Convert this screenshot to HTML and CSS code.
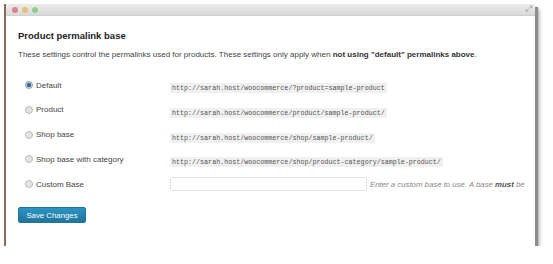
FILE: index.html
```html
<!DOCTYPE html>
<html lang="en">
  <head>
    <meta charset="UTF-8" />
    <title>Product permalink base</title>
    <link rel="stylesheet" href="styles.css">
  </head>
  <body>
    <div class="window">
      <div class="titlebar">
        <span class="dot red"></span>
        <span class="dot yellow"></span>
        <span class="dot green"></span>
        <span class="resize">&#x2922;</span>
      </div>
      <div class="content">
        <h3>Product permalink base</h3>
        <p class="desc">These settings control the permalinks used for products. These settings only apply when <strong>not using "default" permalinks above</strong>.</p>

        <div class="options">
          <label class="opt"><span class="radio checked"></span>Default</label>
          <div><code>http://sarah.host/woocommerce/?product=sample-product</code></div>

          <label class="opt"><span class="radio"></span>Product</label>
          <div><code>http://sarah.host/woocommerce/product/sample-product/</code></div>

          <label class="opt"><span class="radio"></span>Shop base</label>
          <div><code>http://sarah.host/woocommerce/shop/sample-product/</code></div>

          <label class="opt"><span class="radio"></span>Shop base with category</label>
          <div><code>http://sarah.host/woocommerce/shop/product-category/sample-product/</code></div>

          <label class="opt"><span class="radio"></span>Custom Base</label>
          <div class="custom">
            <input type="text" />
            <span class="help">Enter a custom base to use. A base <strong>must</strong> be</span>
          </div>
        </div>

        <button class="save">Save Changes</button>
      </div>
    </div>
  </body>
</html>
```

FILE: styles.css
```css
body {
  margin: 0;
  background: #fff;
  font-family: "Liberation Sans", Arial, sans-serif;
  color: #333;
}

.window {
  margin: 4px 0 0 4px;
  width: 529px;
  height: 242px;
  border-left: 2px solid #8d6b58;
  background: #fff;
  box-shadow: 3px 3px 1px #8c8c8c, 5px 5px 3px #c4c4c4;
  overflow: hidden;
}

.titlebar {
  height: 11px;
  background: linear-gradient(#ececec, #d9d9d9);
  border-bottom: 1px solid #cfcfcf;
  display: flex;
  align-items: center;
  gap: 4px;
  padding-left: 6px;
  position: relative;
}

.dot {
  width: 6px;
  height: 6px;
  border-radius: 50%;
}

.red { background: #e0828a; }
.yellow { background: #e8c070; }
.green { background: #8fcc8a; }

.resize {
  position: absolute;
  right: 3px;
  top: 0;
  font-size: 8px;
  color: #999;
}

.content {
  padding: 14px 8px 0 12px;
  white-space: nowrap;
  overflow: hidden;
}

h3 {
  margin: 0;
  font-size: 9.5px;
  font-weight: bold;
  color: #222;
}

.desc {
  margin: 9px 0 0;
  font-size: 8px;
  color: #444;
}

.desc strong {
  color: #333;
}

.options {
  display: grid;
  grid-template-columns: 152px 1fr;
  grid-auto-rows: 14px;
  row-gap: 10.75px;
  align-items: center;
  margin-top: 19px;
}

.opt {
  display: flex;
  align-items: center;
  gap: 3px;
  padding-left: 7px;
  font-size: 8px;
  color: #444;
}

.radio {
  width: 6px;
  height: 6px;
  border-radius: 50%;
  border: 0.5px solid #bbb;
  background: #e4e4e4;
}

.radio.checked {
  background: radial-gradient(circle, #3d6a93 45%, #c8d3de 55%);
  border-color: #8aa0b4;
}

code {
  font-family: "Liberation Mono", "DejaVu Sans Mono", monospace;
  font-size: 6.7px;
  background: #f0f0f0;
  color: #555;
  padding: 1px 2px;
}

.custom {
  display: flex;
  align-items: center;
  gap: 3px;
}

.custom input {
  width: 195px;
  height: 12px;
  margin: 0;
  padding: 0;
  border: 1px solid #e2e2e2;
  border-radius: 2px;
}

.help {
  font-size: 7.8px;
  font-style: italic;
  color: #888;
  overflow: hidden;
}

.help strong {
  color: #555;
}

.save {
  margin-top: 16px;
  width: 68px;
  height: 16px;
  padding: 0;
  border: 1px solid #21759b;
  border-radius: 2px;
  background: linear-gradient(#2a95c5, #21759b);
  color: #fff;
  font-family: "Liberation Sans", Arial, sans-serif;
  font-size: 7.8px;
}
```
